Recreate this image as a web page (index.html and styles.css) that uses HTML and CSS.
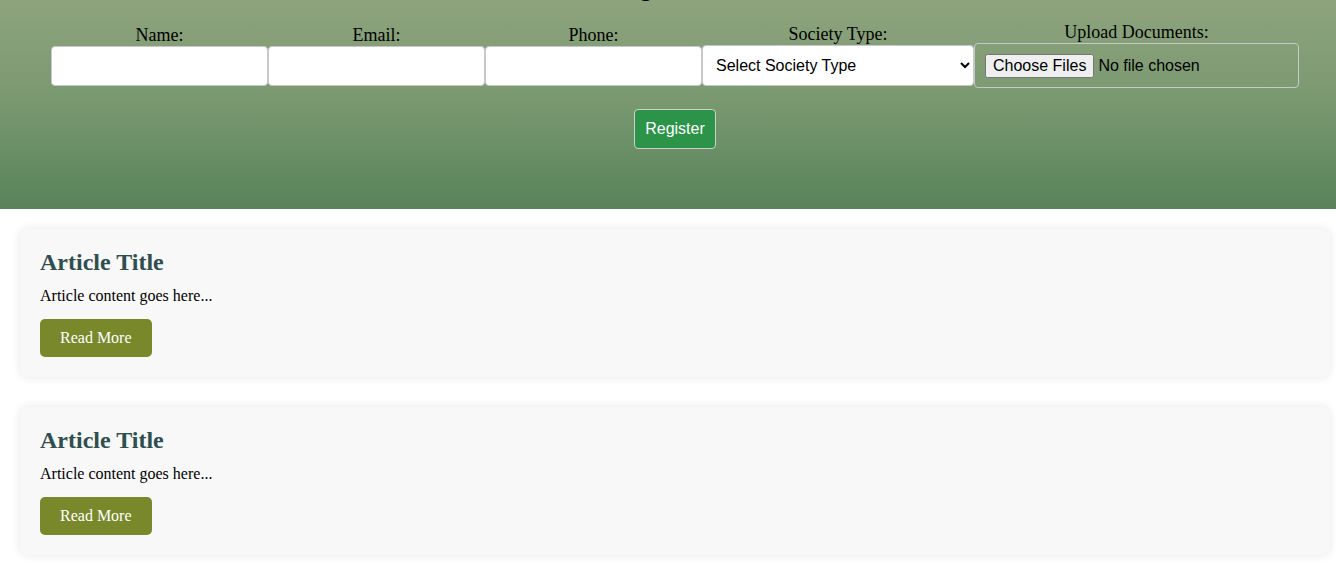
FILE: index.html
```html
<!DOCTYPE html>
<html lang="en">
<head>
<meta charset="utf-8">
<title>Society Registration</title>
<link rel="stylesheet" href="styles.css">
</head>
<body>
<div class="page">
  <section class="hero">
    <h2 class="hero-title">Registration</h2>
    <form class="reg-form">
      <div class="fields">
        <div class="field w-text">
          <label class="field-label" for="name">Name:</label>
          <input class="text-input" id="name" type="text">
        </div>
        <div class="field w-text">
          <label class="field-label" for="email">Email:</label>
          <input class="text-input" id="email" type="email">
        </div>
        <div class="field w-text">
          <label class="field-label" for="phone">Phone:</label>
          <input class="text-input" id="phone" type="tel">
        </div>
        <div class="field w-select">
          <label class="field-label" for="stype">Society Type:</label>
          <select class="select-input" id="stype">
            <option>Select Society Type</option>
          </select>
        </div>
        <div class="field w-file">
          <label class="field-label" for="docs">Upload Documents:</label>
          <input class="file-input" id="docs" type="file" multiple>
        </div>
      </div>
      <button class="register-btn" type="button">Register</button>
    </form>
  </section>

  <main class="articles">
    <article class="card">
      <h2 class="card-title">Article Title</h2>
      <p class="card-text">Article content goes here...</p>
      <button class="read-btn" type="button">Read More</button>
    </article>
    <article class="card">
      <h2 class="card-title">Article Title</h2>
      <p class="card-text">Article content goes here...</p>
      <button class="read-btn" type="button">Read More</button>
    </article>
  </main>
</div>
</body>
</html>
```
FILE: styles.css
```css
html, body {
  margin: 0;
  padding: 0;
  overflow: hidden;
  background: #ffffff;
}

body {
  font-family: "Liberation Serif", "Times New Roman", serif;
  font-size: 16px;
  color: #000;
}

.page {
  width: 1350px;
}

.hero {
  margin-top: -26px;
  background: linear-gradient(to bottom, #93a680 0%, #7c9a72 50%, #58835a 100%);
  text-align: center;
  padding: 0 0 60px;
}

.hero-title {
  margin: 0 0 19px;
  font-size: 24px;
  line-height: 28px;
  font-weight: bold;
  color: #000;
}

.reg-form {
  display: flex;
  flex-direction: column;
  align-items: center;
}

.fields {
  display: flex;
  justify-content: center;
  align-items: center;
}

.field {
  display: flex;
  flex-direction: column;
  align-items: center;
}

.w-text { width: 217px; }
.w-select { width: 272px; }
.w-file { width: 325px; }

.field-label {
  display: block;
  line-height: 22px;
  font-size: 18px;
}

.text-input {
  box-sizing: border-box;
  width: 217px;
  height: 40px;
  border: 1px solid #c8c8c8;
  border-radius: 4px;
  background: #fff;
  padding: 0 10px;
  font-family: "Liberation Sans", Arial, sans-serif;
  font-size: 16px;
}

.select-input {
  box-sizing: border-box;
  width: 272px;
  height: 41px;
  border: 1px solid #c8c8c8;
  border-radius: 4px;
  background: #fff;
  padding: 0 9px;
  font-family: "Liberation Sans", Arial, sans-serif;
  font-size: 16px;
  color: #000;
}

.file-input {
  box-sizing: border-box;
  width: 325px;
  height: 45px;
  border: 1px solid #c8c8c8;
  border-radius: 4px;
  padding: 10px;
  font-family: "Liberation Sans", Arial, sans-serif;
  font-size: 16px;
  color: #000;
  text-align: left;
}

.register-btn {
  margin-top: 21px;
  box-sizing: border-box;
  height: 40px;
  padding: 0 10px;
  background: #2b9448;
  color: #fff;
  border: 1px solid #cfcfcf;
  border-radius: 4px;
  font-family: "Liberation Sans", Arial, sans-serif;
  font-size: 16px;
}

.articles {
  display: flex;
  flex-direction: column;
  gap: 30px;
  padding: 20px 20px;
}

.card {
  background: #f8f8f8;
  border-radius: 8px;
  box-shadow: 0 0 10px rgba(0, 0, 0, 0.1);
  padding: 20px;
}

.card-title {
  margin: 0 0 11px;
  font-size: 24px;
  line-height: 27px;
  font-weight: bold;
  color: #2f4f4f;
}

.card-text {
  margin: 0 0 14px;
  font-size: 16px;
  line-height: 18px;
}

.read-btn {
  display: block;
  height: 38px;
  padding: 0 20px;
  background: #78882a;
  color: #fff;
  border: none;
  border-radius: 5px;
  font-family: "Liberation Serif", "Times New Roman", serif;
  font-size: 16px;
}
```
